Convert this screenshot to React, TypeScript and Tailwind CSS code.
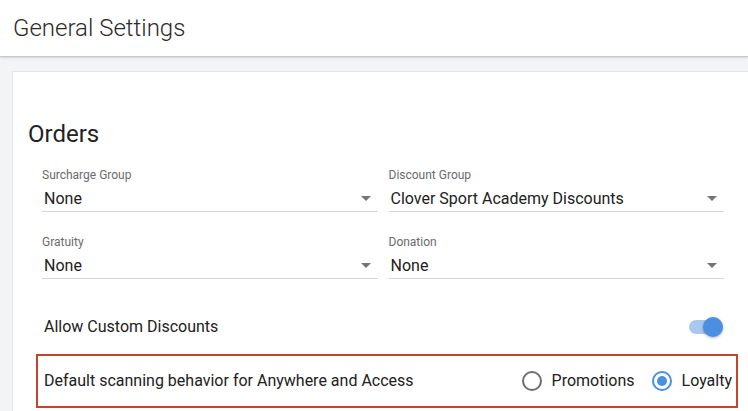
import React from "react";

function Caret() {
  return (
    <svg width="10" height="5" viewBox="0 0 10 5" className="shrink-0">
      <path d="M0 0 L10 0 L5 5 Z" fill="#757575" />
    </svg>
  );
}

function SelectField({ label, value }: { label: string; value: string }) {
  return (
    <div className="flex flex-col">
      <div className="h-4 text-[12px] leading-4 text-[#6b6b6b]">{label}</div>
      <div className="mt-[1px] flex h-[28px] items-center justify-between border-b border-[#d6d6d6] pl-[2px] pr-[7px] pt-[2px]">
        <span className="text-[16px] text-[#212121]">{value}</span>
        <Caret />
      </div>
    </div>
  );
}

function Radio({ checked, label }: { checked: boolean; label: string }) {
  return (
    <div className="flex items-center gap-[10px]">
      <div
        className={
          checked
            ? "flex h-[20px] w-[20px] items-center justify-center rounded-full border-2 border-[#4a8fe2]"
            : "flex h-[20px] w-[20px] items-center justify-center rounded-full border-2 border-[#6e6e6e]"
        }
      >
        {checked && <div className="h-[10px] w-[10px] rounded-full bg-[#4a8fe2]" />}
      </div>
      <span className="text-[16px] text-[#212121]">{label}</span>
    </div>
  );
}

export default function App() {
  return (
    <div
      className="h-[411px] w-[748px] overflow-hidden bg-[#f3f4f6]"
      style={{ fontFamily: "Roboto, 'Liberation Sans', sans-serif" }}
    >
      <header className="flex h-[57px] items-center border-b border-[#c9c9c9] bg-white pl-[13px] shadow-[0_1px_2px_rgba(0,0,0,0.12)]">
        <h1 className="text-[24px] font-light text-[#2b2b2b]">General Settings</h1>
      </header>
      <div className="pl-3 pt-[14px]">
        <div className="min-h-[400px] border-l border-t border-[#e6e6e6] bg-white pl-[15px] pt-[48px]">
          <h2 className="text-[24px] leading-[28px] text-[#222]">Orders</h2>
          <div className="w-[696px] pl-[14px]">
            <div className="mt-[19px] grid grid-cols-2 gap-x-[11px] gap-y-[22px]">
              <SelectField label="Surcharge Group" value="None" />
              <SelectField label="Discount Group" value="Clover Sport Academy Discounts" />
              <SelectField label="Gratuity" value="None" />
              <SelectField label="Donation" value="None" />
            </div>
            <div className="mt-[34px] flex h-[28px] items-center justify-between pl-[2px] pr-[1px]">
              <span className="text-[16px] text-[#212121]">Allow Custom Discounts</span>
              <div className="relative h-[20px] w-[34px]">
                <div className="absolute left-0 top-[3px] h-[14px] w-[34px] rounded-full bg-[#a8c8f0]" />
                <div className="absolute right-0 top-0 h-[20px] w-[20px] rounded-full bg-[#4a8fe2] shadow-[0_1px_3px_rgba(0,0,0,0.3)]" />
              </div>
            </div>
            <div className="-ml-[6px] mt-[13px] flex h-[54px] w-[702px] items-center justify-between border-2 border-[#c8432b] pl-[6px] pr-[4px]">
              <span className="text-[16px] text-[#212121]">Default scanning behavior for Anywhere and Access</span>
              <div className="flex items-center gap-[17px]">
                <Radio checked={false} label="Promotions" />
                <Radio checked={true} label="Loyalty" />
              </div>
            </div>
          </div>
        </div>
      </div>
    </div>
  );
}
